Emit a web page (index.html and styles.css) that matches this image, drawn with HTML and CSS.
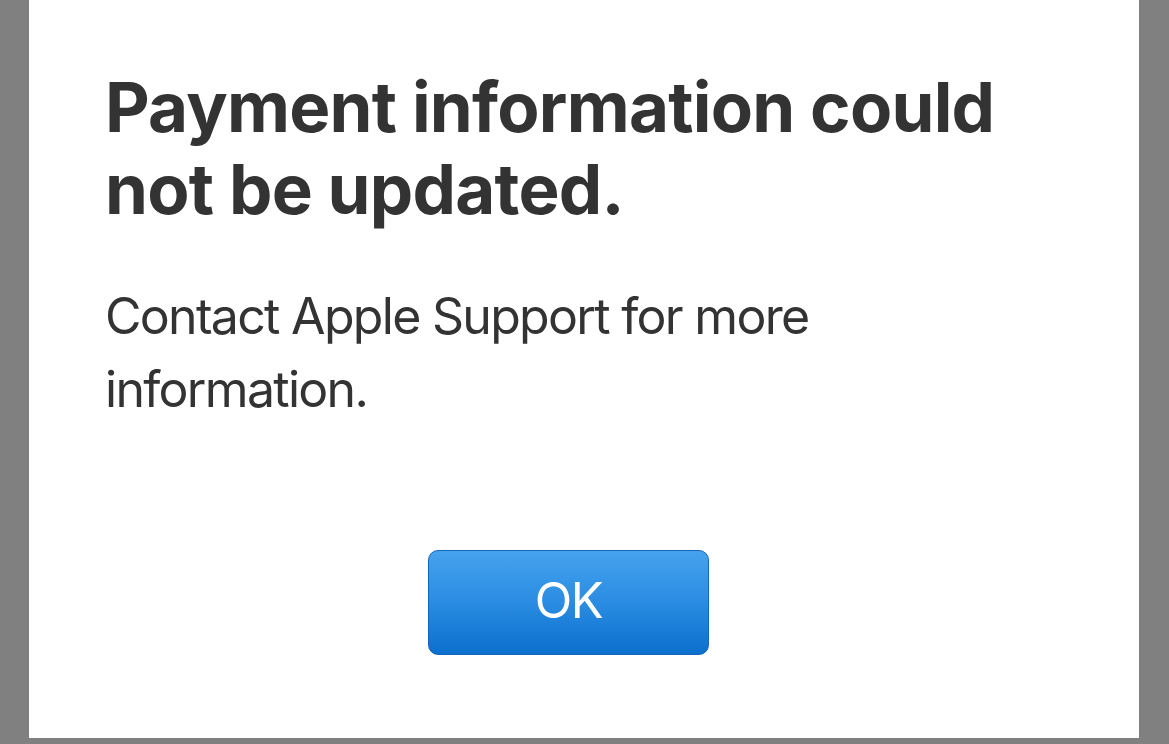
FILE: index.html
```html
<!DOCTYPE html>
<html>
<head>
<meta charset="utf-8">
<link rel="stylesheet" href="styles.css">
</head>
<body>
<div class="panel">
  <h1 class="title">Payment information could<br>not be updated.</h1>
  <p class="message">Contact Apple Support for more<br>information.</p>
  <div class="actions">
    <button class="ok">OK</button>
  </div>
</div>
</body>
</html>
```
FILE: styles.css
```css
html, body {
  margin: 0;
  padding: 0;
  background: #808080;
  width: 1169px;
  height: 744px;
  overflow: hidden;
}
.panel {
  margin-left: 29px;
  width: 1110px;
  height: 738px;
  background: #ffffff;
  box-sizing: border-box;
  padding: 66px 0 0 76px;
  font-family: Inter, "Noto Sans", sans-serif;
  color: #333333;
}
.title {
  margin: 0;
  font-size: 69px;
  line-height: 82px;
  font-weight: 700;
  letter-spacing: -0.75px;
}
.message {
  margin: 50px 0 0 0;
  font-size: 50px;
  line-height: 73px;
  font-weight: 400;
  letter-spacing: -1.7px;
}
.actions {
  margin-top: 124px;
  padding-left: 323px;
}
.ok {
  width: 281px;
  height: 105px;
  border: 1px solid #1566b8;
  border-radius: 10px;
  background: linear-gradient(#45a2ee, #2a8ce2 50%, #0b6fcd);
  color: #ffffff;
  font-family: Inter, "Noto Sans", sans-serif;
  font-size: 49px;
  font-weight: 400;
  letter-spacing: -1.5px;
  padding: 0 0 4px 0;
}
```
